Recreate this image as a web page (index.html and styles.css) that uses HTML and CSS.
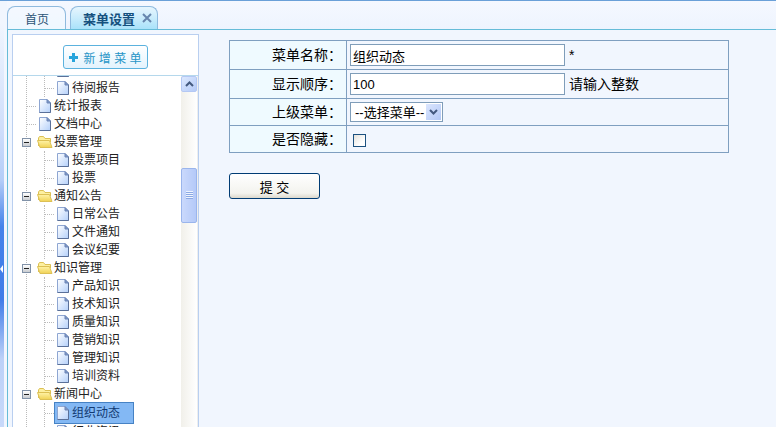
FILE: index.html
```html
<!DOCTYPE html>
<html lang="zh-CN">
<head>
<meta charset="utf-8">
<title>菜单设置</title>
<link rel="stylesheet" href="styles.css">
</head>
<body>
<svg class="defs" aria-hidden="true">
  <defs>
    <linearGradient id="pg" x1="0" y1="0" x2="1" y2="1"><stop offset="0" stop-color="#fff"/><stop offset="1" stop-color="#b4d0fa"/></linearGradient>
    <linearGradient id="fg" x1="0" y1="0" x2="0" y2="1"><stop offset="0" stop-color="#fff3a8"/><stop offset="1" stop-color="#f0d255"/></linearGradient>
  </defs>
  <symbol id="doc" viewBox="0 0 12 14"><path d="M.5 .5H8L11.5 4V13.5H.5Z" fill="url(#pg)" stroke="#8ea6d2"/><path d="M11.5 4V13.5H.5" fill="none" stroke="#5a7099"/><path d="M8 .5V4H11.5Z" fill="#7f98c6" stroke="#6c85b6"/></symbol>
  <symbol id="folder" viewBox="0 0 16 12"><path d="M1.5 10V2L2.5 .5H6.5L8 2.5H13.5V6" fill="#fdf0a0" stroke="#dcc055"/><path d="M.5 4.5H12.5L15 11.5H3Z" fill="url(#fg)" stroke="#dcc055"/></symbol>
</svg>
<div class="splitter"><button class="collapse" aria-label="收起"></button></div>
<div class="workspace">
  <nav class="tabs">
    <a class="tab" href="#home">首页</a>
    <span class="tab active"><a href="#menu">菜单设置</a><button class="close" aria-label="关闭"><svg viewBox="0 0 10 10"><path d="M1 1L9 9M9 1L1 9"/></svg></button></span>
  </nav>
  <div class="content">
    <aside class="sidebar">
      <div class="toolbar"><button class="add"><svg viewBox="0 0 9 9"><path d="M4.5 0V9M0 4.5H9"/></svg>新 增 菜 单</button></div>
      <div class="treebox">
        <ul class="tree">
          <li class="group"><ul>
            <li class="row"><svg class="doc"><use href="#doc"/></svg></li>
            <li class="row"><svg class="doc"><use href="#doc"/></svg><a href="#t">待阅报告</a></li>
          </ul></li>
          <li class="row"><svg class="doc"><use href="#doc"/></svg><a href="#t">统计报表</a></li>
          <li class="row"><svg class="doc"><use href="#doc"/></svg><a href="#t">文档中心</a></li>
          <li class="group"><div class="row"><button class="toggle" aria-label="折叠"></button><svg class="folder"><use href="#folder"/></svg><a href="#t">投票管理</a></div><ul>
            <li class="row"><svg class="doc"><use href="#doc"/></svg><a href="#t">投票项目</a></li>
            <li class="row"><svg class="doc"><use href="#doc"/></svg><a href="#t">投票</a></li>
          </ul></li>
          <li class="group"><div class="row"><button class="toggle" aria-label="折叠"></button><svg class="folder"><use href="#folder"/></svg><a href="#t">通知公告</a></div><ul>
            <li class="row"><svg class="doc"><use href="#doc"/></svg><a href="#t">日常公告</a></li>
            <li class="row"><svg class="doc"><use href="#doc"/></svg><a href="#t">文件通知</a></li>
            <li class="row"><svg class="doc"><use href="#doc"/></svg><a href="#t">会议纪要</a></li>
          </ul></li>
          <li class="group"><div class="row"><button class="toggle" aria-label="折叠"></button><svg class="folder"><use href="#folder"/></svg><a href="#t">知识管理</a></div><ul>
            <li class="row"><svg class="doc"><use href="#doc"/></svg><a href="#t">产品知识</a></li>
            <li class="row"><svg class="doc"><use href="#doc"/></svg><a href="#t">技术知识</a></li>
            <li class="row"><svg class="doc"><use href="#doc"/></svg><a href="#t">质量知识</a></li>
            <li class="row"><svg class="doc"><use href="#doc"/></svg><a href="#t">营销知识</a></li>
            <li class="row"><svg class="doc"><use href="#doc"/></svg><a href="#t">管理知识</a></li>
            <li class="row"><svg class="doc"><use href="#doc"/></svg><a href="#t">培训资料</a></li>
          </ul></li>
          <li class="group"><div class="row"><button class="toggle" aria-label="折叠"></button><svg class="folder"><use href="#folder"/></svg><a href="#t">新闻中心</a></div><ul>
            <li class="row selected"><svg class="doc"><use href="#doc"/></svg><a href="#t">组织动态</a></li>
            <li class="row"><svg class="doc"><use href="#doc"/></svg><a href="#t">行业资讯</a></li>
          </ul></li>
        </ul>
        <div class="scrollbar">
          <button class="up" aria-label="向上滚动"><svg viewBox="0 0 9 6"><path d="M1 5L4.5 1.5L8 5"/></svg></button>
          <div class="track"><div class="thumb"></div></div>
        </div>
      </div>
    </aside>
    <main>
      <form>
        <table>
          <tr><th><label for="name">菜单名称：</label></th><td><input id="name" type="text" value="组织动态"><span class="note">*</span></td></tr>
          <tr><th><label for="order">显示顺序：</label></th><td><input id="order" type="text" value="100"><span class="note">请输入整数</span></td></tr>
          <tr class="short"><th><label for="parent">上级菜单：</label></th><td><span class="pick"><select id="parent"><option>--选择菜单--</option></select><svg class="arrow" viewBox="0 0 15 16"><path d="M4 6L7.5 9.5L11 6"/></svg></span></td></tr>
          <tr class="short"><th><label for="hide">是否隐藏：</label></th><td><input id="hide" type="checkbox"></td></tr>
        </table>
        <button class="submit" type="button">提 交</button>
      </form>
    </main>
  </div>
</div>
</body>
</html>
```
FILE: styles.css
```css
* { box-sizing: border-box; }
body {
  margin: 0;
  height: 100vh;
  display: flex;
  overflow: hidden;
  border-top: 1px solid #6aa0d8;
  background: #f1f6fe;
  font: 12px "Liberation Sans", "Noto Sans CJK SC", sans-serif;
  color: #222;
}
.defs { position: absolute; width: 0; height: 0; }
a { color: inherit; text-decoration: none; }
button { padding: 0; border: 0; background: none; font: inherit; }
ul { list-style: none; margin: 0; padding: 0; }

.splitter {
  flex: 0 0 4px;
  margin-right: 3px;
  display: flex;
  align-items: center;
  background: linear-gradient(#f1f6fe 5%, #cfdefb 30%, #b5cdf8 42%, #4583ea 53%, #3f7ce8 70%, #bcd1f8 84%, #c8d9fa);
}
.collapse {
  margin-top: 110px;
  border: solid transparent;
  border-width: 4px 3px 4px 0;
  border-right-color: #fff;
}
.workspace {
  flex: 1;
  min-width: 0;
  display: flex;
  flex-direction: column;
}
.tabs {
  height: 29px;
  padding-top: 5px;
  display: flex;
  gap: 4px;
  border-bottom: 1px solid #66bcd8;
  background: linear-gradient(#f5f8ff, #eef4fe);
}
.tab {
  padding: 0 16px 0 17px;
  display: flex;
  align-items: center;
  border: 1px solid #8fbade;
  border-bottom: 0;
  border-radius: 8px 8px 0 0;
  background: linear-gradient(#f4f8ff, #eff8ff);
  color: #2c5577;
}
.tab.active {
  padding: 0 5px 0 12px;
  gap: 7px;
  font-size: 13px;
  font-weight: bold;
  color: #14507e;
  background: linear-gradient(#e6f5fe, #c9ecfc 50%, #a9e2fa);
}
.close { width: 10px; height: 10px; display: flex; }
.close svg { width: 10px; height: 10px; stroke: #6685ad; stroke-width: 2; fill: none; }

.content {
  flex: 1;
  min-height: 0;
  display: flex;
  padding: 4px 0 0 4px;
  border-left: 1px solid #66bcd8;
}
.sidebar {
  flex: 0 0 187px;
  display: flex;
  flex-direction: column;
  border: 1px solid #b9cff0;
  border-bottom: 0;
  background: #fff;
}
.toolbar {
  flex: 0 0 41px;
  padding-top: 4px;
  display: flex;
  justify-content: center;
  align-items: center;
  border-bottom: 1px solid #b5d8ec;
}
.add {
  height: 24px;
  padding: 0 5px;
  display: flex;
  align-items: center;
  gap: 5px;
  border: 1px solid #5bb2de;
  border-radius: 3px;
  background: linear-gradient(#fff, #e3f3fd);
  color: #2795c7;
  white-space: nowrap;
}
.add svg { width: 9px; height: 9px; stroke: #26a4dc; stroke-width: 3; }

.treebox {
  flex: 1;
  min-height: 0;
  overflow: hidden;
  display: flex;
}
.tree {
  flex: 1;
  margin-top: -15px;
  margin-left: 13px;
  height: max-content;
  border-left: 1px dotted #bbb;
}
.row {
  height: 18px;
  display: flex;
  align-items: center;
  white-space: nowrap;
  line-height: 18px;
}
.row::before {
  content: "";
  width: 9px;
  margin-right: 3px;
  border-top: 1px dotted #bbb;
}
.doc { width: 12px; height: 14px; margin-right: 3px; flex: none; }
.folder { width: 16px; height: 12px; margin-right: 1px; flex: none; }
.group > ul { margin-left: 17px; border-left: 1px dotted #bbb; }
.group > .row::before { display: none; }
.toggle {
  flex: none;
  width: 9px;
  height: 9px;
  margin: 0 6px 0 -5px;
  border: 1px solid #8192a8;
  background: linear-gradient(#222, #222) center / 5px 1px no-repeat, linear-gradient(#fff, #c9ccd0);
}
.row.selected {
  position: relative;
  z-index: 0;
  height: 20px;
  color: #123a72;
}
.row.selected::after {
  content: "";
  position: absolute;
  z-index: -1;
  left: 9px;
  width: 78px;
  height: 20px;
  border: 1px solid #4682c4;
  background: #83b8f4;
}
.scrollbar {
  flex: 0 0 17px;
  display: flex;
  flex-direction: column;
  border-right: 1px solid #eee;
  background: linear-gradient(90deg, #f1f0ea, #fff);
}
.up {
  height: 16px;
  display: flex;
  align-items: center;
  justify-content: center;
  border: 1px solid #b4c8f4;
  border-radius: 2px;
  background: linear-gradient(135deg, #dce8fe, #b5cbf8);
}
.up svg { width: 9px; height: 6px; fill: none; stroke: #43597f; stroke-width: 2; }
.track { flex: 1; display: flex; flex-direction: column; }
.track::before { content: ""; flex: 76; }
.track::after { content: ""; flex: 205; }
.thumb {
  flex: 54;
  border: 1px solid #9ab5ec;
  border-radius: 2px;
  background: repeating-linear-gradient(#eef4fe 0 1px, #8ba9e4 1px 2px) center / 7px 8px no-repeat, linear-gradient(90deg, #cad9fc, #b4c9f8);
}

main { flex: 1; min-width: 0; padding: 6px 47px 0 30px; }
table {
  width: 100%;
  border-collapse: collapse;
  table-layout: fixed;
  font-size: 14px;
  color: #000;
}
tr { height: 29px; }
tr.short { height: 27px; }
th, td { padding: 0 3px; border: 1px solid #7f9fc0; }
th {
  width: 117px;
  padding-right: 4px;
  font-weight: normal;
  text-align: right;
  line-height: 20px;
  background: #effaff;
}
td > * { vertical-align: middle; }
input[type="text"] {
  width: 215px;
  height: 22px;
  padding: 0 2px;
  border: 1px solid #7f9db9;
  background: #fff;
  font: inherit;
  font-size: 13px;
  color: #000;
}
.note { margin-left: 4px; line-height: 20px; }
.pick { display: inline-flex; position: relative; }
select {
  appearance: none;
  width: 93px;
  height: 20px;
  padding: 0 4px;
  border: 1px solid #7f9db9;
  border-radius: 0;
  background: #fff;
  font: inherit;
  font-size: 13px;
  color: #000;
}
.arrow {
  position: absolute;
  right: 2px;
  top: 2px;
  width: 15px;
  height: 16px;
  background: linear-gradient(135deg, #dbe6fe, #b3c8f6);
  fill: none;
  stroke: #43597f;
  stroke-width: 2;
  pointer-events: none;
}
input[type="checkbox"] {
  appearance: none;
  width: 13px;
  height: 13px;
  margin: 0 3px;
  border: 1px solid #1c5180;
  background: linear-gradient(135deg, #e4e2dc, #fff 70%);
}
.submit {
  display: block;
  width: 91px;
  height: 26px;
  margin-top: 20px;
  border: 1px solid #003c74;
  border-radius: 3px;
  background: linear-gradient(#fff, #f3f3ee 80%, #dcd8cc);
  font-size: 13px;
  color: #000;
}
```
